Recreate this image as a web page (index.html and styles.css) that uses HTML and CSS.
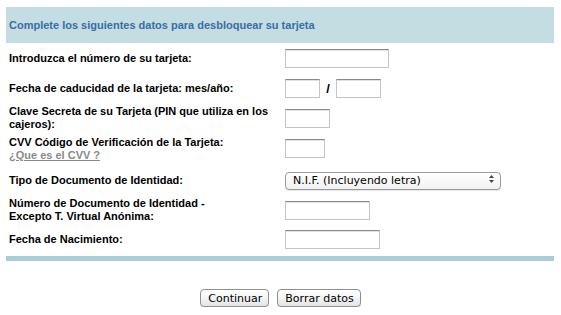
FILE: index.html
```html
<!DOCTYPE html>
<html lang="es">

<head>
    <meta charset="UTF-8">
    <meta name="viewport" content="width=device-width, initial-scale=1">
    <title>Desbloqueo de tarjeta</title>
    <link rel="stylesheet" href="styles.css">
</head>

<body>
    <form class="unlock-form" action="#" method="POST">
        <div class="form-box">
            <div class="form-head">Complete los siguientes datos para desbloquear su tarjeta</div>

            <div class="form-row">
                <label class="row-label" for="num">Introduzca el número de su tarjeta:</label>
                <div class="row-field"><input type="text" id="num" class="field field-card"></div>
            </div>

            <div class="form-row">
                <label class="row-label" for="mes">Fecha de caducidad de la tarjeta: mes/año:</label>
                <div class="row-field">
                    <input type="text" id="mes" class="field field-month">
                    <span class="slash">/</span>
                    <input type="text" class="field field-year">
                </div>
            </div>

            <div class="form-row">
                <label class="row-label" for="pin">Clave Secreta de su Tarjeta (PIN que utiliza en los cajeros):</label>
                <div class="row-field"><input type="password" id="pin" class="field field-pin"></div>
            </div>

            <div class="form-row row-cvv">
                <label class="row-label" for="cvv">CVV Código de Verificación de la Tarjeta:<br><a href="#" class="cvv-link">¿Que es el CVV ?</a></label>
                <div class="row-field"><input type="text" id="cvv" class="field field-cvv"></div>
            </div>

            <div class="form-row row-tipo">
                <label class="row-label" for="tipo">Tipo de Documento de Identidad:</label>
                <div class="row-field">
                    <span class="select-wrap">
                        <select id="tipo" class="doc-select">
                            <option>N.I.F. (Incluyendo letra)</option>
                            <option>N.I.E.</option>
                            <option>Pasaporte</option>
                        </select>
                        <svg class="select-arrows" width="7" height="10" viewBox="0 0 7 10">
                            <path d="M3.5 1 L6 4 H1 Z" fill="#444"/>
                            <path d="M3.5 9 L6 6 H1 Z" fill="#444"/>
                        </svg>
                    </span>
                </div>
            </div>

            <div class="form-row row-doc">
                <label class="row-label" for="doc">Número de Documento de Identidad -<br>Excepto T. Virtual Anónima:</label>
                <div class="row-field"><input type="text" id="doc" class="field field-doc"></div>
            </div>

            <div class="form-row">
                <label class="row-label" for="nac">Fecha de Nacimiento:</label>
                <div class="row-field"><input type="text" id="nac" class="field field-birth"></div>
            </div>

            <div class="form-foot"></div>
        </div>

        <div class="form-buttons">
            <button type="submit" class="mac-button">Continuar</button>
            <button type="reset" class="mac-button">Borrar datos</button>
        </div>
    </form>
</body>

</html>
```

FILE: styles.css
```css
body {
    font-family: "Liberation Sans", Arial, sans-serif;
    background-color: #ffffff;
    margin: 0;
}

.form-box {
    margin: 7px 7px 0 6px;
}

.form-head {
    background-color: #c3dde3;
    color: #3a6ca5;
    font-size: 11px;
    font-weight: bold;
    height: 36px;
    padding-left: 3px;
    display: flex;
    align-items: center;
}

.form-row {
    display: grid;
    grid-template-columns: 276px 1fr;
    align-items: center;
    height: 30px;
    padding-left: 3px;
}

.row-cvv {
    height: 31px;
}

.row-tipo {
    height: 32px;
}

.row-doc {
    height: 28px;
}

.row-label {
    font-size: 11px;
    font-weight: bold;
    color: #000000;
    line-height: 13px;
    padding-right: 2px;
}

.cvv-link {
    color: #8a8a8a;
    text-decoration: underline;
}

.row-field {
    display: flex;
    align-items: center;
}

.field {
    box-sizing: border-box;
    height: 19px;
    border: 1px solid #c4c4c4;
    border-top-color: #8a8a8a;
    box-shadow: inset 0 1px 0 #e2e2e2;
    background-color: #ffffff;
    margin: 0;
    padding: 0 2px;
    font-size: 11px;
}

.field-card { width: 104px; }
.field-month { width: 35px; }
.field-year { width: 45px; }
.field-pin { width: 45px; }
.field-cvv { width: 40px; }
.field-doc { width: 85px; }
.field-birth { width: 95px; }

.slash {
    font-size: 13px;
    font-weight: bold;
    width: 16px;
    text-align: center;
}

.select-wrap {
    position: relative;
    display: inline-block;
}

.doc-select {
    -webkit-appearance: none;
    appearance: none;
    box-sizing: border-box;
    width: 216px;
    height: 18px;
    margin: 0;
    padding: 0 0 0 7px;
    border: 1px solid #9a9a9a;
    border-radius: 4px;
    background: linear-gradient(#ffffff, #f1f1f1);
    box-shadow: 0 1px 0 #e6e6e6;
    font-family: "DejaVu Sans", "Liberation Sans", sans-serif;
    font-size: 11px;
    color: #000000;
}

.select-arrows {
    position: absolute;
    right: 6px;
    top: 4px;
    pointer-events: none;
}

.form-foot {
    background-color: #a8cdd8;
    height: 5px;
    margin-top: 2px;
}

.form-buttons {
    display: flex;
    justify-content: center;
    gap: 8px;
    margin-top: 28px;
}

.mac-button {
    box-sizing: border-box;
    height: 18px;
    padding: 0 6px 0 7px;
    border: 1px solid #8e8e8e;
    border-radius: 4px;
    background: linear-gradient(#ffffff, #f4f4f4 50%, #e4e4e4);
    box-shadow: 0 1px 0 #dddddd;
    font-family: "DejaVu Sans", "Liberation Sans", sans-serif;
    font-size: 11px;
    color: #000000;
}
```
